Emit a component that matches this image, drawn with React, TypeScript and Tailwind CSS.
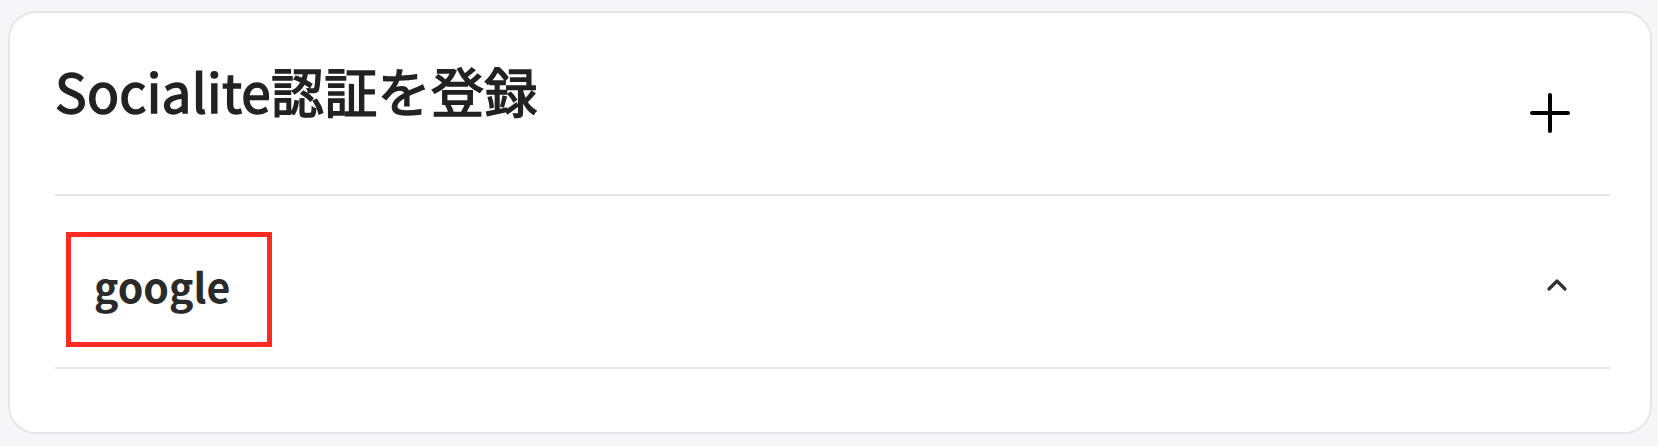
import { useState } from 'react';

export default function App() {
  const [open, setOpen] = useState(true);

  return (
    <div
      className="min-h-[446px] bg-[#f6f6f8] pt-[11px] pl-[8px]"
      style={{ fontFamily: '"Noto Sans CJK JP", "Noto Sans", sans-serif' }}
    >
      <div className="w-[1644px] rounded-[28px] border-2 border-[#e6e6e8] bg-white pl-[45px] pr-[40px] pb-[63px]">
        {/* header */}
        <div className="flex h-[183px] items-start justify-between border-b-2 border-[#e5e5e7]">
          <h1 className="mt-[41px] text-[53px] font-normal leading-[72px] tracking-[0.3px] text-[#222] [-webkit-text-stroke:1.5px_#222]">
            Socialite認証を登録
          </h1>
          <button className="mt-[78px] mr-[38px] flex h-[44px] w-[44px] items-center justify-center text-black">
            <svg width="40" height="40" viewBox="0 0 40 40" fill="none" stroke="currentColor" strokeWidth="4" strokeLinecap="round">
              <path d="M20 2v36M2 20h36" />
            </svg>
          </button>
        </div>

        {/* provider row */}
        <div className="flex h-[173px] items-start justify-between border-b-2 border-[#e5e5e7]">
          <div className="mt-[36px] ml-[11px] flex h-[115px] w-[206px] items-center border-[5px] border-[#ff2a22] pl-[23px]">
            <span className="pb-[8px] text-[41px] font-semibold leading-none text-[#2a2a2a]">google</span>
          </div>
          <button
            onClick={() => setOpen(!open)}
            className="mt-[77px] mr-[41px] flex h-[24px] w-[24px] items-center justify-center text-[#333]"
          >
            <svg width="22" height="14" viewBox="0 0 22 14" fill="none" stroke="currentColor" strokeWidth="3.2" strokeLinecap="round" strokeLinejoin="round">
              <path d={open ? 'M3 11l8-8 8 8' : 'M3 3l8 8 8-8'} />
            </svg>
          </button>
        </div>
      </div>
    </div>
  );
}
